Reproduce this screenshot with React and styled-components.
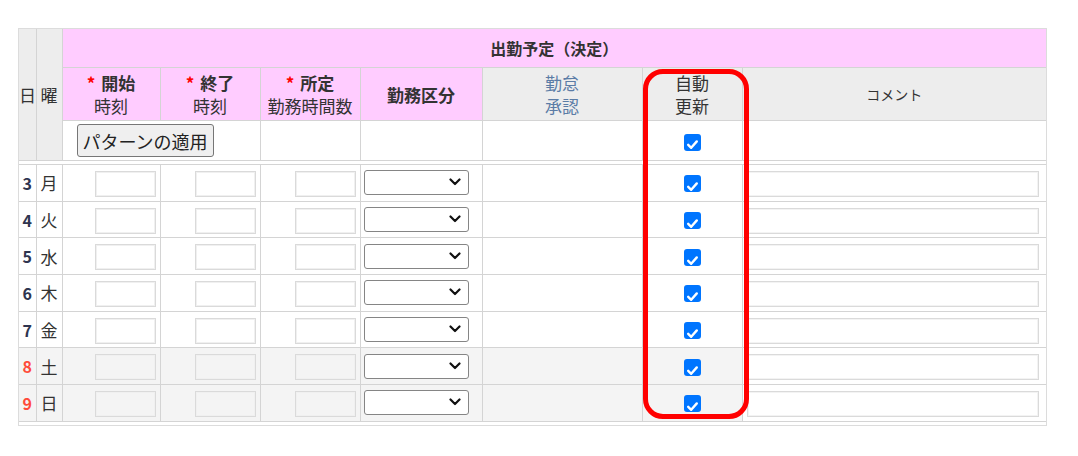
import React from "react";
import styled, { createGlobalStyle } from "styled-components";

const GlobalStyle = createGlobalStyle`
	body {
		margin: 0;
		background: #fff;
		font-family: "Noto Sans CJK JP", "Liberation Sans", sans-serif;
		color: #333;
	}
`;

const widths = [17, 26, 98, 100, 100, 122, 160, 100, 304];

const days = [
	{ day: 3, week: "月" },
	{ day: 4, week: "火" },
	{ day: 5, week: "水" },
	{ day: 6, week: "木" },
	{ day: 7, week: "金" },
	{ day: 8, week: "土", holiday: true },
	{ day: 9, week: "日", holiday: true },
];

const Page = styled.div`
	padding: 28px 0 0 18px;
`;

const Frame = styled.div`
	position: relative;
	width: 1027px;
	border: 1px solid #dcdcdc;
	padding-bottom: 3px;
`;

const Grid = styled.table`
	width: 1027px;
	table-layout: fixed;
	border-collapse: collapse;
	border-left-style: hidden;
	border-right-style: hidden;
	${({ head }) => (head ? "border-top-style: hidden;" : "margin-top: 3px;")}
	font-size: 17px;
`;

const HeadCell = styled.th`
	border: 1px solid #d4d4d4;
	background: ${({ tone }) => (tone === "pink" ? "#fcf" : tone === "grey" ? "#ededed" : "#fff")};
	color: ${({ link }) => (link ? "#5b7ca6" : "#333")};
	font-weight: ${({ bold }) => (bold ? 700 : 400)};
	font-size: ${({ small }) => (small ? "14px" : "17px")};
	line-height: 23px;
	text-align: center;
	vertical-align: middle;
	padding: 0;
	height: ${({ h }) => h}px;
`;

const TitleText = styled.span`
	font-size: 16px;
`;

const Req = styled.span`
	color: #f00;
	margin-right: 6px;
`;

const Line = styled.div`
	white-space: nowrap;
`;

const PatternCell = styled.td`
	border: 1px solid #d4d4d4;
	padding: 0 0 0 14px;
	vertical-align: middle;
`;

const PatternButton = styled.button`
	font-family: "Noto Sans CJK JP", sans-serif;
	font-size: 18px;
	line-height: 22px;
	color: #222;
	height: 33px;
	padding: 0 5px;
	background: #efefef;
	border: 1px solid #767676;
	border-radius: 3px;
	display: block;
`;

const Cell = styled.td`
	border: 1px solid #d4d4d4;
	height: 35.7px;
	padding: 0;
	background: ${({ holiday }) => (holiday ? "#f4f4f4" : "transparent")};
	text-align: ${({ align }) => align || "center"};
	vertical-align: middle;
`;

const DayNum = styled(Cell)`
	font-weight: 700;
	font-size: 16px;
	color: ${({ holiday }) => (holiday ? "#ff4b3a" : "#2e3550")};
`;

const Week = styled(Cell)`
	font-size: 17px;
	color: #333;
`;

const TimeBox = styled.input`
	box-sizing: border-box;
	width: 61px;
	height: 26px;
	margin-right: 4px;
	border: 1px solid #dadada;
	box-shadow: inset 0 0 0 1px #f0f0f0;
	background: ${({ disabled }) => (disabled ? "#f4f4f4" : "#fff")};
	vertical-align: middle;
`;

const SelectWrap = styled.div`
	position: relative;
	width: 105px;
	height: 25px;
	margin-left: 3px;
`;

const Select = styled.select`
	appearance: none;
	box-sizing: border-box;
	width: 105px;
	height: 25px;
	border: 1px solid #858585;
	border-radius: 3px;
	background: #fff;
	display: block;
`;

const Chevron = styled.svg`
	position: absolute;
	right: 8px;
	top: 8px;
	pointer-events: none;
`;

const Check = styled.span`
	display: inline-block;
	width: 17px;
	height: 17px;
	border-radius: 3px;
	background: #0075ff;
	vertical-align: middle;
	position: relative;
	top: ${({ lift }) => lift || 0}px;
`;

const CommentBox = styled.input`
	box-sizing: border-box;
	width: 292px;
	height: 26px;
	margin-left: 4px;
	border: 1px solid #dadada;
	box-shadow: inset 0 0 0 1px #f3f3f3;
	background: #fff;
	vertical-align: middle;
`;

const Highlight = styled.div`
	position: absolute;
	left: 624px;
	top: 40px;
	width: 96px;
	height: 340px;
	border: 5px solid #ff0000;
	border-radius: 20px;
	pointer-events: none;
`;

function Tick({ lift })
{
	return (
		<Check lift={lift}>
			<svg width="17" height="17" viewBox="0 0 17 17">
				<path d="M4.2 8.8 L7.2 11.8 L12.8 5.4" fill="none" stroke="#fff" strokeWidth="2.4" strokeLinecap="round" strokeLinejoin="round" />
			</svg>
		</Check>
	);
}

function Cols()
{
	return (
		<colgroup>
			{widths.map((w, i) => <col key={i} style={{ width: w }} />)}
		</colgroup>
	);
}

function DayRow({ row })
{
	const h = row.holiday;
	return (
		<tr>
			<DayNum holiday={h}>{row.day}</DayNum>
			<Week holiday={h}>{row.week}</Week>
			<Cell holiday={h} align="right"><TimeBox disabled={h} /></Cell>
			<Cell holiday={h} align="right"><TimeBox disabled={h} /></Cell>
			<Cell holiday={h} align="right"><TimeBox disabled={h} /></Cell>
			<Cell holiday={h} align="left">
				<SelectWrap>
					<Select defaultValue="">
						<option value=""></option>
					</Select>
					<Chevron width="12" height="8" viewBox="0 0 12 8">
						<path d="M1.5 1.5 L6 6 L10.5 1.5" fill="none" stroke="#111" strokeWidth="2.2" strokeLinecap="round" strokeLinejoin="round" />
					</Chevron>
				</SelectWrap>
			</Cell>
			<Cell holiday={h} />
			<Cell holiday={h}><Tick lift={-2} /></Cell>
			<Cell align="left"><CommentBox /></Cell>
		</tr>
	);
}

export default function App()
{
	return (
		<Page>
			<GlobalStyle />
			<Frame>
				<Grid head>
					<Cols />
					<tbody>
						<tr>
							<HeadCell tone="grey" rowSpan={3}>日</HeadCell>
							<HeadCell tone="grey" rowSpan={3}>曜</HeadCell>
							<HeadCell tone="pink" bold colSpan={7} h={38}><TitleText>出勤予定（決定）</TitleText></HeadCell>
						</tr>
						<tr>
							<HeadCell tone="pink" h={52}>
								<Line><b><Req>*</Req>開始</b></Line>
								<Line>時刻</Line>
							</HeadCell>
							<HeadCell tone="pink">
								<Line><b><Req>*</Req>終了</b></Line>
								<Line>時刻</Line>
							</HeadCell>
							<HeadCell tone="pink">
								<Line><b><Req>*</Req>所定</b></Line>
								<Line>勤務時間数</Line>
							</HeadCell>
							<HeadCell tone="pink" bold>勤務区分</HeadCell>
							<HeadCell tone="grey" link>
								<Line>勤怠</Line>
								<Line>承認</Line>
							</HeadCell>
							<HeadCell tone="grey">
								<Line>自動</Line>
								<Line>更新</Line>
							</HeadCell>
							<HeadCell tone="grey" small>コメント</HeadCell>
						</tr>
						<tr>
							<PatternCell colSpan={2}>
								<PatternButton type="button">パターンの適用</PatternButton>
							</PatternCell>
							<HeadCell h={39} />
							<HeadCell />
							<HeadCell />
							<HeadCell><Tick lift={-1} /></HeadCell>
							<HeadCell />
						</tr>
					</tbody>
				</Grid>
				<Grid>
					<Cols />
					<tbody>
						{days.map((row) => <DayRow key={row.day} row={row} />)}
					</tbody>
				</Grid>
				<Highlight />
			</Frame>
		</Page>
	);
}
